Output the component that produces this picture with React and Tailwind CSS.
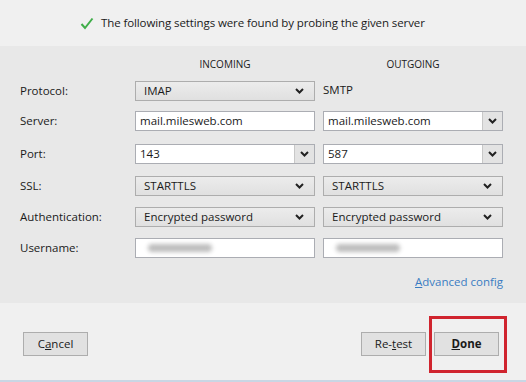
import React from 'react';

const font = { fontFamily: '"Open Sans", "Noto Sans", sans-serif' };

const Chevron = () => (
  <svg width="9" height="6" viewBox="0 0 9 6" className="text-[#222]">
    <path d="M1 1 L4.5 4.5 L8 1" fill="none" stroke="currentColor" strokeWidth="2" />
  </svg>
);

// non-editable dropdown (gray button look)
const Select = ({ value }) => (
  <div className="flex h-5 w-[180px] items-center justify-between border border-[#adadad] bg-gradient-to-b from-[#ececec] to-[#e0e0e0] pl-2 pr-2.5 text-[11.5px] text-[#1a1a1a]">
    <span>{value}</span>
    <Chevron />
  </div>
);

// editable text field, optionally with a dropdown button
const Field = ({ value, combo, blur }) => (
  <div className="flex h-5 w-[180px] items-stretch border border-[#abadb3] bg-white text-[11.5px] text-[#1a1a1a]">
    <div className="flex flex-1 items-center pl-1">
      {blur ? (
        <span className="ml-2 h-[8px] w-[64px] rounded-full bg-[#bdbdbd] blur-[2px]" />
      ) : (
        value
      )}
    </div>
    {combo && (
      <div className="flex w-5 items-center justify-center border-l border-[#c8c8c8] bg-[#e3e3e3]">
        <Chevron />
      </div>
    )}
  </div>
);

const Row = ({ label, mt, children }) => (
  <div className={`flex items-center ${mt}`}>
    <div className="w-[115px] text-[11.5px] text-[#1a1a1a]">{label}</div>
    <div className="flex gap-2">{children}</div>
  </div>
);

const Button = ({ children, bold }) => (
  <button
    className={`flex h-6 w-[65px] items-center justify-center border border-[#adadad] bg-[#e1e1e1] text-[11.5px] text-[#1a1a1a] ${bold ? 'font-bold' : ''}`}
  >
    {children}
  </button>
);

export default function App() {
  return (
    <div className="flex h-[382px] w-[526px] flex-col bg-[#f0f0f0]" style={font}>
      <div className="flex h-[46px] items-center gap-[7px] pl-[80px] text-[11.5px] tracking-[-0.1px] text-[#1a1a1a]">
        <svg width="14" height="13" viewBox="0 0 14 13">
          <path d="M1.5 7 L5 11 L12.5 1.5" fill="none" stroke="#3fae49" strokeWidth="2" />
        </svg>
        <span>The following settings were found by probing the given server</span>
      </div>

      <div className="h-[257px] bg-[#e8e8e8] pl-5 pr-[23px]">
        <div className="mt-[11px] flex text-[10px] text-[#1a1a1a]">
          <div className="w-[115px]" />
          <div className="w-[180px] text-center">INCOMING</div>
          <div className="ml-2 w-[180px] text-center">OUTGOING</div>
        </div>
        <Row label="Protocol:" mt="mt-[9px]">
          <Select value="IMAP" />
          <div className="w-[180px] text-[11.5px] text-[#1a1a1a]">SMTP</div>
        </Row>
        <Row label="Server:" mt="mt-[10px]">
          <Field value="mail.milesweb.com" />
          <Field value="mail.milesweb.com" combo />
        </Row>
        <Row label="Port:" mt="mt-[13px]">
          <Field value="143" combo />
          <Field value="587" combo />
        </Row>
        <Row label="SSL:" mt="mt-3">
          <Select value="STARTTLS" />
          <Select value="STARTTLS" />
        </Row>
        <Row label="Authentication:" mt="mt-[11px]">
          <Select value="Encrypted password" />
          <Select value="Encrypted password" />
        </Row>
        <Row label="Username:" mt="mt-[11px]">
          <Field blur />
          <Field blur />
        </Row>
        <div className="mt-[15px] flex justify-end text-[11.5px] text-[#3a7cc2]">
          <span>
            <span className="underline">A</span>dvanced config
          </span>
        </div>
      </div>

      <div className="relative flex flex-1 items-center justify-between border-b-2 border-[#c9d6e4] px-[23px] pt-1">
        <Button>
          C<span className="underline">a</span>ncel
        </Button>
        <div className="flex gap-2 pr-[4px]">
          <Button>
            Re-<span className="underline">t</span>est
          </Button>
          <Button bold>
            <span className="underline">D</span>one
          </Button>
        </div>
        <div className="absolute left-[429px] top-[13px] h-[57px] w-[78px] border-[3px] border-[#d0242e]" />
      </div>
    </div>
  );
}
